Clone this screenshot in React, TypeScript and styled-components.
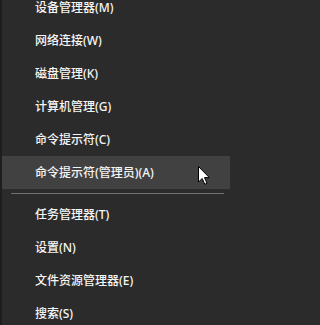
import * as React from "react";
import styled, { createGlobalStyle } from "styled-components";

const GlobalStyle = createGlobalStyle`
  html, body {
    margin: 0;
    padding: 0;
    background: #2b2b2b;
    overflow: hidden;
  }
`;

interface MenuEntry {
  label: string;
  hover?: boolean;
}

const groups: MenuEntry[][] = [
  [
    { label: "设备管理器(M)" },
    { label: "网络连接(W)" },
    { label: "磁盘管理(K)" },
    { label: "计算机管理(G)" },
    { label: "命令提示符(C)" },
    { label: "命令提示符(管理员)(A)", hover: true },
  ],
  [
    { label: "任务管理器(T)" },
    { label: "设置(N)" },
    { label: "文件资源管理器(E)" },
    { label: "搜索(S)" },
  ],
];

const Menu = styled.div`
  width: 230px;
  height: 325px;
  overflow: hidden;
  background: #2b2b2b;
  border-left: 2px solid #1e1e1e;
  box-sizing: border-box;
  font-family: "Segoe UI", "Noto Sans", "Noto Sans CJK SC", sans-serif;
`;

const List = styled.div`
  display: flex;
  flex-direction: column;
  margin-top: -9px;
`;

const Row = styled.div<{ $hover?: boolean }>`
  position: relative;
  display: flex;
  align-items: center;
  height: 33px;
  padding-left: 33px;
  background: ${({ $hover }) => ($hover ? "#414141" : "transparent")};
  color: #f5f5f5;
  font-size: 12px;
  font-weight: 500;
  line-height: 1;
  white-space: nowrap;
`;

const Separator = styled.div`
  height: 9px;
  display: flex;
  align-items: center;
  padding: 0 6px 0 9px;

  &::after {
    content: "";
    flex: 1;
    height: 1px;
    background: #707070;
  }
`;

const Cursor = styled.svg`
  position: absolute;
  left: 196px;
  top: 10px;
  width: 12px;
  height: 19px;
`;

const Pointer = () => (
  <Cursor viewBox="0 0 12 19">
    <path
      d="M0.5 0.5 L0.5 16 L4.2 12.5 L6.8 18.3 L9 17.3 L6.5 11.6 L11.3 11.6 Z"
      fill="#ffffff"
      stroke="#000000"
      strokeWidth="1"
      strokeLinejoin="miter"
    />
  </Cursor>
);

export default function App() {
  return (
    <>
      <GlobalStyle />
      <Menu>
        <List>
          {groups.map((group, gi) => (
            <React.Fragment key={gi}>
              {gi > 0 && <Separator />}
              {group.map((entry) => (
                <Row key={entry.label} $hover={entry.hover}>
                  {entry.label}
                  {entry.hover && <Pointer />}
                </Row>
              ))}
            </React.Fragment>
          ))}
        </List>
      </Menu>
    </>
  );
}
